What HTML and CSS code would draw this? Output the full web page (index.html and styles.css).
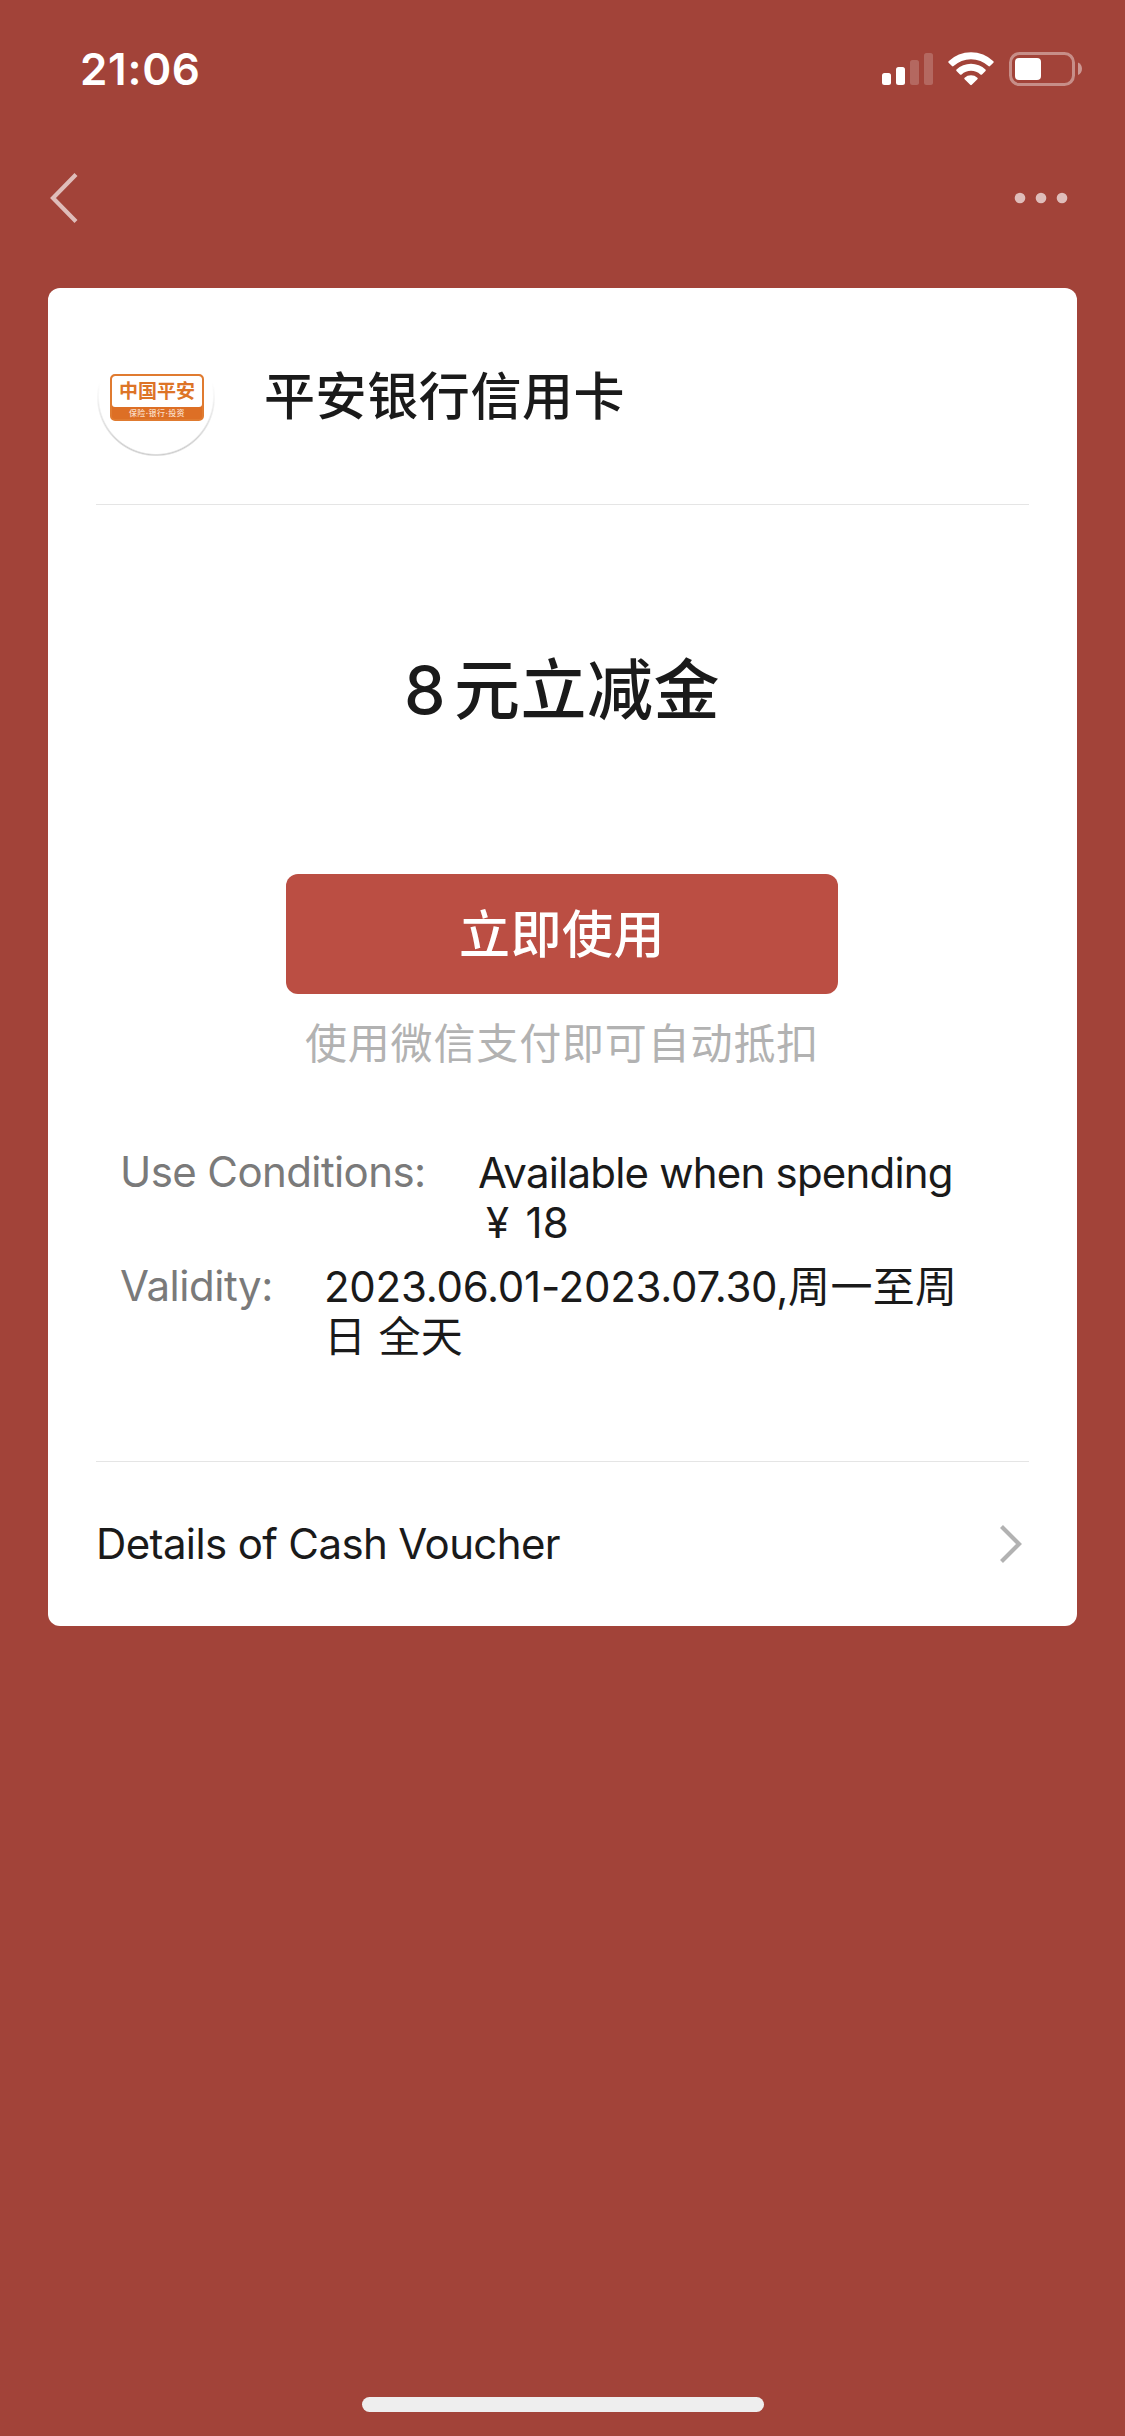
FILE: index.html
```html
<!DOCTYPE html>
<html lang="zh-CN">
<head>
<meta charset="utf-8">
<title>平安银行信用卡</title>
<link rel="stylesheet" href="styles.css">
</head>
<body>
<div class="screen">
  <header class="status">
    <span class="clock">21:06</span>
    <svg class="status-icons" width="202" height="36" viewBox="881 51 202 36">
      <g fill="#fff">
        <rect x="882" y="73" width="9" height="12" rx="2.5"/>
        <rect x="896" y="67" width="9" height="18" rx="2.5"/>
        <rect x="910" y="60" width="9" height="25" rx="2.5" opacity=".2"/>
        <rect x="924" y="53" width="9" height="32" rx="2.5" opacity=".2"/>
        <path d="M948.6 61.3a32.3 32.3 0 0 1 44.8 0q.7.8 0 1.500l-3.400 3.300q-.8.7-1.600 0a25.200 25.200 0 0 0-34.800 0q-.8.7-1.600 0l-3.400-3.300q-.7-.7 0-1.500z"/>
        <path d="M956.500 69.600a21 21 0 0 1 29 0q.7.8 0 1.500l-3.500 3.400q-.8.700-1.600 0a13.800 13.800 0 0 0-18.800 0q-.8.700-1.600 0l-3.500-3.400q-.7-.7 0-1.500z"/>
        <path d="M964.600 77.700a9.600 9.600 0 0 1 12.800 0q.8.800 0 1.600l-5.600 5.500q-.8.800-1.600 0l-5.600-5.500q-.8-.8 0-1.600z"/>
        <rect x="1015" y="58" width="26" height="22" rx="4"/>
        <path d="M1078 62.500c5.300 2.200 5.300 10.300 0 12.500z" opacity=".45"/>
      </g>
      <rect x="1010.500" y="53.500" width="63" height="31" rx="9" fill="none" stroke="#fff" stroke-opacity=".4" stroke-width="3"/>
    </svg>
  </header>
  <nav class="nav">
    <svg width="30" height="52" viewBox="0 0 30 52"><path d="M27 2.500L4 26 27 49.500" fill="none" stroke="#dfbdba" stroke-width="4.200"/></svg>
    <svg width="54" height="12" viewBox="0 0 54 12" fill="#dfbdba"><circle cx="6" cy="6" r="5.300"/><circle cx="27" cy="6" r="5.300"/><circle cx="48" cy="6" r="5.300"/></svg>
  </nav>
  <main class="card">
    <section class="merchant">
      <div class="avatar">
        <div class="brand">
          <div class="brand-name">中国平安</div>
          <div class="brand-tag">保险·银行·投资</div>
        </div>
      </div>
      <h1 class="merchant-name">平安银行信用卡</h1>
    </section>
    <section class="offer">
      <div class="amount"><span class="amount-number">8</span>元立减金</div>
      <button class="use">立即使用</button>
      <p class="note">使用微信支付即可自动抵扣</p>
      <div class="terms">
        <div class="term">
          <span class="label label-conditions">Use Conditions:</span>
          <span class="value"><span class="condition">Available when spending</span><br><span class="yen">¥</span>18</span>
        </div>
        <div class="term">
          <span class="label label-validity">Validity:</span>
          <span class="value"><span class="dates">2023.06.01-2023.07.30,</span>周一至周<br>日 全天</span>
        </div>
      </div>
    </section>
    <a class="details">
      <span class="details-text">Details of Cash Voucher</span>
      <svg width="24" height="42" viewBox="0 0 24 42"><path d="M2.500 3.500L20 21 2.500 38.500" fill="none" stroke="#b2b2b2" stroke-width="4.200"/></svg>
    </a>
  </main>
  <div class="home-bar"></div>
</div>
</body>
</html>
```
FILE: styles.css
```css
* { box-sizing: border-box; }
body {
  margin: 0;
  font-family: Inter, "Noto Sans CJK SC", sans-serif;
  color: #1a1a1a;
}
.screen {
  display: flex;
  flex-direction: column;
  width: 1125px;
  height: 2436px;
  background: #a24339;
}
.status {
  display: flex;
  justify-content: space-between;
  align-items: center;
  height: 138px;
  padding: 0 42px 0 80px;
}
.clock {
  color: #fff;
  font-size: 44px;
  font-weight: 600;
  line-height: 60px;
  letter-spacing: .700px;
}
.nav {
  display: flex;
  justify-content: space-between;
  align-items: center;
  height: 120px;
  padding: 0 57px 0 49px;
}
.card {
  display: flex;
  flex-direction: column;
  height: 1338px;
  margin: 30px 48px 0;
  padding: 0 48px;
  border-radius: 12px;
  background: #fff;
}
.merchant {
  display: flex;
  align-items: center;
  gap: 48px;
  height: 217px;
  padding-top: 2px;
  border-bottom: 1px solid #e5e5e5;
}
.avatar {
  display: flex;
  align-items: center;
  justify-content: center;
  width: 120px;
  height: 120px;
  padding-left: 2px;
  background:
    linear-gradient(#fff 38%, rgba(255, 255, 255, 0) 90%),
    radial-gradient(circle at 60px 60px, #fff 56.500px, #ccc 58px, #fff 59.500px);
}
.brand {
  width: 94px;
  height: 47px;
  border: 2px solid #e07b30;
  border-radius: 5px;
  background: #dd6f25;
  text-align: center;
  overflow: hidden;
}
.brand-name {
  height: 31px;
  border-radius: 3px;
  background: #fff;
  color: #dd7427;
  font-size: 19px;
  font-weight: 700;
  line-height: 32px;
}
.brand-tag {
  color: #f9dcc6;
  font-size: 8px;
  font-weight: 500;
  line-height: 13px;
  letter-spacing: .400px;
}
.merchant-name {
  margin: 0;
  font-size: 51px;
  font-weight: 500;
  line-height: 60px;
  letter-spacing: .600px;
}
.offer {
  display: flex;
  flex-direction: column;
  align-items: center;
  padding: 145px 25px 99px 24px;
  border-bottom: 1px solid #e5e5e5;
}
.amount {
  font-size: 66px;
  font-weight: 500;
  line-height: 80px;
  letter-spacing: .500px;
}
.amount-number { margin-right: 8px; }
.use {
  width: 552px;
  height: 120px;
  margin-top: 144px;
  padding: 0 0 7px;
  border: 0;
  border-radius: 12px;
  background: #bb4e43;
  color: #fff;
  font: inherit;
  font-size: 51px;
  font-weight: 500;
  letter-spacing: .500px;
}
.note {
  margin: 25px 0 -1px;
  color: #b2b2b2;
  font-size: 42px;
  font-weight: 400;
  line-height: 50px;
  letter-spacing: .850px;
}
.terms {
  display: flex;
  flex-direction: column;
  gap: 14px;
  width: 100%;
  margin-top: 80px;
}
.term {
  display: flex;
  align-items: flex-start;
  font-size: 42px;
  line-height: 50px;
}
.label {
  flex: none;
  margin-top: -1px;
  color: #7a7a7a;
}
.label-conditions {
  width: 358px;
  letter-spacing: -.600px;
}
.label-validity {
  width: 204px;
  letter-spacing: -.450px;
}
.value {
  flex: none;
  letter-spacing: .300px;
  white-space: nowrap;
}
.condition { letter-spacing: -.800px; }
.dates { letter-spacing: -.260px; }
.yen { margin: 0 16px 0 8px; }
.details {
  display: flex;
  flex: 1;
  align-items: center;
  justify-content: space-between;
  padding-right: 6px;
  font-size: 42px;
  line-height: 50px;
}
.details-text { letter-spacing: -.620px; }
.home-bar {
  width: 402px;
  height: 15px;
  margin: auto auto 24px;
  border-radius: 8px;
  background: #eee;
}
```
